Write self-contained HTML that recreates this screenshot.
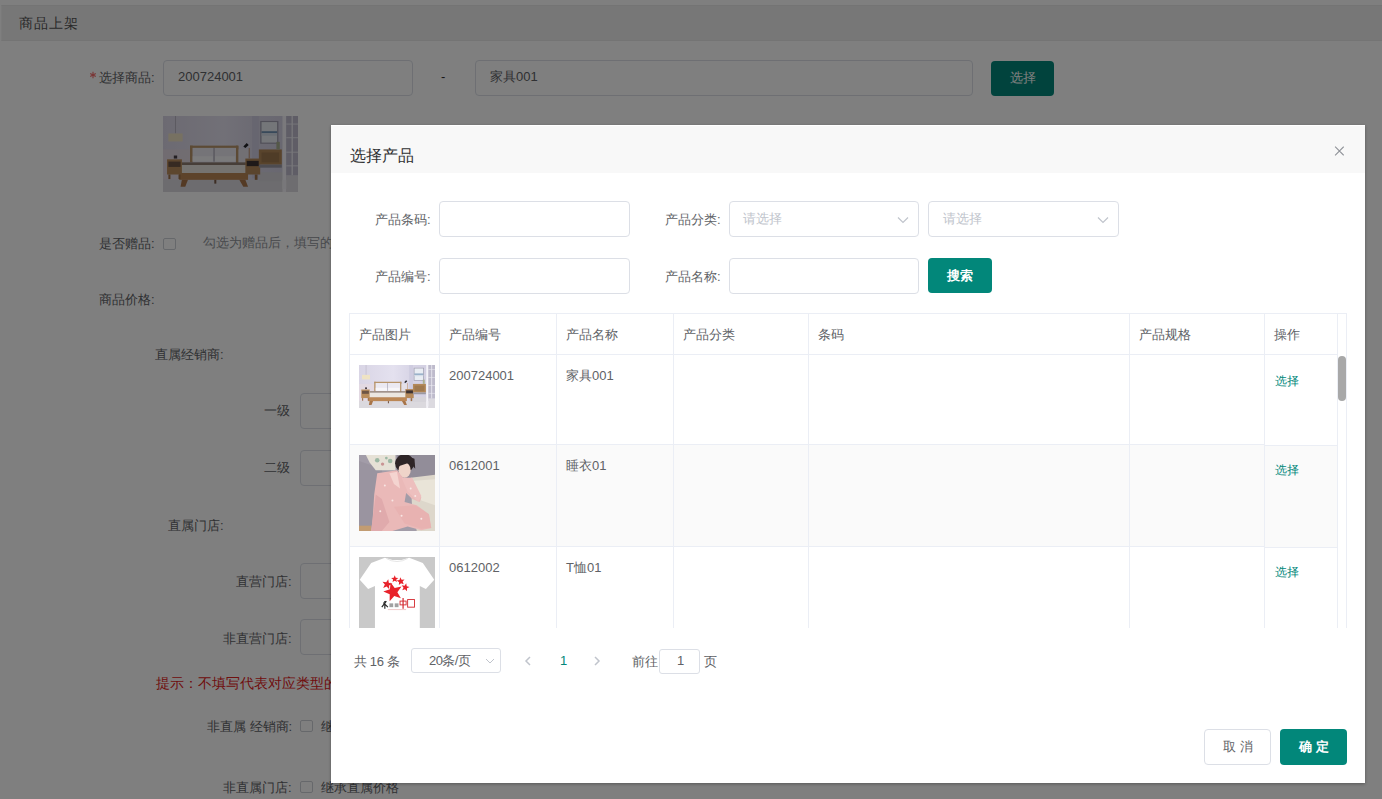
<!DOCTYPE html>
<html><head><meta charset="utf-8">
<style>
html,body{margin:0;padding:0}
body{width:1382px;height:799px;overflow:hidden;position:relative;background:#fff;font-family:"Liberation Sans",sans-serif;color:#606266;font-size:13px}
.a{position:absolute;white-space:nowrap;line-height:20px}
.box{position:absolute;box-sizing:border-box;border:1px solid #dcdfe6;border-radius:4px;background:#fff}
.cb{position:absolute;box-sizing:border-box;width:13px;height:12px;border:1px solid #cdd0d6;border-radius:2px;background:#fff}
.btn{position:absolute;box-sizing:border-box;border-radius:4px;background:#02877a}
#ov{position:absolute;left:0;top:0;width:1382px;height:799px;background:rgba(0,0,0,.5)}
#modal{position:absolute;left:331px;top:125px;width:1034px;height:658px;background:#fff;box-shadow:0 1px 3px rgba(0,0,0,.3)}
#modal .a{color:#606266}
.vl{position:absolute;width:1px;background:#ebeef5}
.hl{position:absolute;height:1px;background:#ebeef5}
.chev{position:absolute}
</style></head>
<body>
<!-- page under overlay -->
<div style="position:absolute;left:1px;top:5px;width:1381px;height:36px;box-sizing:border-box;background:#efefef;border-top:1px solid #e8e8e8;border-bottom:1px solid #e8e8e8;border-left:1px solid #f4f4f4"></div>
<div class="a" style="left:19px;top:13px;font-size:14px;letter-spacing:1px;color:#555">商品上架</div>

<svg style="position:absolute;left:89px;top:71px" width="8" height="8" viewBox="0 0 8 8"><path d="M4 0.8V7.2M1.2 2.4L6.8 5.6M6.8 2.4L1.2 5.6" stroke="#f56c6c" stroke-width="1.1"/></svg>
<div class="a" style="left:99px;top:68px">选择商品:</div>
<div class="box" style="left:163px;top:60px;width:250px;height:36px"></div>
<div class="a" style="left:178px;top:67px;font-size:13px">200724001</div>
<div class="a" style="left:441px;top:67px;font-size:13px;color:#303133">-</div>
<div class="box" style="left:475px;top:60px;width:498px;height:36px"></div>
<div class="a" style="left:490px;top:67px;font-size:13px">家具001</div>
<div class="btn" style="left:991px;top:61px;width:63px;height:35px"></div>
<div class="a" style="left:1010px;top:68px;color:#fff">选择</div>

<div id="img0" style="position:absolute;left:163px;top:116px;width:135px;height:76px"><svg viewBox="0 0 100 100" preserveAspectRatio="none" width="100%" height="100%">
<defs>
<linearGradient id="walla" x1="0" y1="0" x2="1" y2="0"><stop offset="0" stop-color="#d9d5e5"/><stop offset="0.45" stop-color="#e4e1ef"/><stop offset="0.68" stop-color="#d8d5e6"/><stop offset="1" stop-color="#d0cde0"/></linearGradient>
<filter id="bla" x="0" y="0" width="100%" height="100%"><feGaussianBlur stdDeviation="0.35"/></filter>
</defs>
<g filter="url(#bla)">
<rect width="100" height="100" fill="url(#walla)"/>
<rect x="0" y="44" width="22" height="40" fill="#e8dadf" opacity="0.6"/>
<rect x="66" y="0" width="5" height="82" fill="#cfcce0"/>
<rect x="0" y="84" width="100" height="16" fill="#dbd9de"/>

<rect x="71" y="74" width="18" height="12" fill="#d6d4da"/>
<!-- pendant lamp -->
<rect x="9" y="0" width="0.5" height="23" fill="#a8a4b2"/>
<rect x="4" y="23" width="10.5" height="10.5" fill="#efe3c4"/>
<!-- headboard -->
<rect x="20" y="39" width="35.5" height="3" fill="#b8956a"/>
<rect x="20" y="39" width="2" height="22" fill="#b8956a"/>
<rect x="54" y="39" width="2" height="24" fill="#b8956a"/>
<rect x="22" y="42" width="15.5" height="18" fill="#ebe9f1"/>
<rect x="38" y="42" width="16" height="18" fill="#ebe9f1"/>
<rect x="37.5" y="42" width="0.6" height="18" fill="#8c8898"/>
<rect x="22" y="53" width="15" height="7" fill="#f7f6f9"/>
<rect x="38.5" y="53" width="15" height="7" fill="#f7f6f9"/>
<rect x="56" y="44" width="7" height="22" fill="#e4e0e8"/>
<!-- blanket/mattress -->
<rect x="14" y="61" width="48" height="3.5" fill="#8e7d70"/>
<rect x="13" y="64.5" width="50" height="10.5" fill="#ebe6e0"/>
<!-- bed frame -->
<rect x="12" y="75" width="51" height="9" fill="#bb8755"/>
<polygon points="14,84 18.5,84 16.5,93 13,93" fill="#a8744a"/>
<polygon points="56.5,84 61,84 63,93 59.5,93" fill="#a8744a"/>
<rect x="38" y="84" width="1.5" height="5" fill="#7a5a48"/>
<!-- left nightstand -->
<rect x="3" y="57" width="11" height="20" fill="#ba8d5c"/>
<rect x="4" y="60" width="9" height="7" fill="#6e5444"/>
<rect x="4" y="77" width="1.5" height="6" fill="#9c7048"/>
<rect x="11.5" y="77" width="1.5" height="6" fill="#9c7048"/>
<rect x="8" y="52" width="2.5" height="4" fill="#4a4048"/>
<!-- right nightstand -->
<rect x="61" y="56" width="11" height="21" fill="#b5895a"/>
<rect x="62" y="59" width="9" height="7" fill="#3e3232"/>
<rect x="68" y="77" width="2" height="7" fill="#9c7048"/>
<!-- desk lamp -->
<rect x="63.5" y="42" width="0.8" height="14" fill="#c49a78"/>
<polygon points="59.5,40 62,35.5 63.5,38 61,42" fill="#202028"/>
<!-- painting -->
<rect x="72" y="6.5" width="13.5" height="30" fill="#a09eb0"/>
<rect x="73" y="8" width="11.5" height="27" fill="#e9edf3"/>
<rect x="73" y="20" width="11.5" height="2.6" fill="#7193b4"/>
<rect x="73" y="23" width="11.5" height="3" fill="#d4dde8"/>
<!-- sideboard -->
<rect x="71" y="44" width="17" height="20" fill="#b38858"/>
<rect x="73" y="48" width="13" height="13" fill="#8c6a48" opacity="0.5"/>
<rect x="71" y="64" width="17" height="4" fill="#9a98a2"/>
<rect x="84" y="34" width="2.5" height="10" fill="#a9b090"/>
<!-- door frame and window -->
<rect x="88.5" y="0" width="2.8" height="100" fill="#f4f3f8"/>
<rect x="91.3" y="0" width="8.7" height="78" fill="#bebbcc"/>
<rect x="95.2" y="0" width="1" height="78" fill="#eeedf4"/>
<rect x="91.3" y="10" width="8.7" height="1.2" fill="#eeedf4"/>
<rect x="91.3" y="28" width="8.7" height="1.2" fill="#eeedf4"/>
<rect x="91.3" y="47" width="8.7" height="1.2" fill="#eeedf4"/>
<rect x="91.3" y="65" width="8.7" height="1.2" fill="#eeedf4"/>
<rect x="91.3" y="78" width="8.7" height="22" fill="#dcdae0"/>
<rect x="88.5" y="84" width="2.8" height="12" fill="#f0eff4"/>
</g>
</svg></div>

<div class="a" style="left:99px;top:234px">是否赠品:</div>
<div class="cb" style="left:163px;top:238px"></div>
<div class="a" style="left:203px;top:233px;color:#909399">勾选为赠品后，填写的价格无效</div>
<div class="a" style="left:99px;top:290px">商品价格:</div>
<div class="a" style="left:155px;top:345px">直属经销商:</div>
<div class="a" style="left:264px;top:401px">一级</div>
<div class="box" style="left:300px;top:393px;width:200px;height:36px"></div>
<div class="a" style="left:264px;top:458px">二级</div>
<div class="box" style="left:300px;top:450px;width:200px;height:36px"></div>
<div class="a" style="left:168px;top:516px">直属门店:</div>
<div class="a" style="left:236px;top:572px">直营门店:</div>
<div class="box" style="left:300px;top:563px;width:200px;height:36px"></div>
<div class="a" style="left:223px;top:629px">非直营门店:</div>
<div class="box" style="left:300px;top:619px;width:200px;height:36px"></div>
<div class="a" style="left:156px;top:673px;font-size:14px;color:#e02020">提示：不填写代表对应类型的价格</div>
<div class="a" style="left:207px;top:717px">非直属 经销商:</div>
<div class="cb" style="left:300px;top:720px"></div>
<div class="a" style="left:321px;top:717px">继承直属价格</div>
<div class="a" style="left:223px;top:778px">非直属门店:</div>
<div class="cb" style="left:300px;top:781px"></div>
<div class="a" style="left:321px;top:778px">继承直属价格</div>

<div id="ov"></div>

<div id="modal"></div>
<div style="position:absolute;left:331px;top:126px;width:1034px;height:47px;background:#f8f8f8"></div>
<div class="a" style="left:350px;top:146px;font-size:16px;color:#303133">选择产品</div>
<svg style="position:absolute;left:1334px;top:146px" width="10" height="10" viewBox="0 0 10 10"><path d="M1.1 0.7L9.7 9.3M9.7 0.7L1.1 9.3" stroke="#909399" stroke-width="1.1"/></svg>

<!-- form -->
<div class="a" style="left:375px;top:210px">产品条码:</div>
<div class="box" style="left:439px;top:201px;width:191px;height:36px"></div>
<div class="a" style="left:665px;top:210px">产品分类:</div>
<div class="box" style="left:729px;top:201px;width:190px;height:36px"></div>
<div class="a" style="left:743px;top:209px;color:#c0c4cc">请选择</div>
<svg class="chev" style="left:897px;top:216px" width="12" height="8" viewBox="0 0 12 8"><path d="M1 1.5L6 6.5L11 1.5" fill="none" stroke="#c0c4cc" stroke-width="1.2"/></svg>
<div class="box" style="left:928px;top:201px;width:191px;height:36px"></div>
<div class="a" style="left:943px;top:209px;color:#c0c4cc">请选择</div>
<svg class="chev" style="left:1097px;top:216px" width="12" height="8" viewBox="0 0 12 8"><path d="M1 1.5L6 6.5L11 1.5" fill="none" stroke="#c0c4cc" stroke-width="1.2"/></svg>

<div class="a" style="left:375px;top:267px">产品编号:</div>
<div class="box" style="left:439px;top:258px;width:191px;height:36px"></div>
<div class="a" style="left:665px;top:267px">产品名称:</div>
<div class="box" style="left:729px;top:258px;width:190px;height:36px"></div>
<div class="btn" style="left:928px;top:258px;width:64px;height:35px"></div>
<div class="a" style="left:947px;top:266px;color:#fff;font-weight:bold">搜索</div>

<!-- table -->
<div style="position:absolute;left:349px;top:313px;width:998px;height:315px;overflow:hidden">
  <div style="position:absolute;left:0;top:131px;width:988px;height:102px;background:#fafafa"></div>
</div>
<div class="hl" style="left:349px;top:313px;width:998px"></div>
<div class="hl" style="left:349px;top:354px;width:989px"></div>
<div class="hl" style="left:349px;top:444px;width:915px"></div>
<div class="hl" style="left:349px;top:546px;width:915px"></div>
<div style="position:absolute;left:1265px;top:444px;width:72px;height:103px;background:#fff"></div>
<div style="position:absolute;left:1265px;top:446px;width:72px;height:101px;background:#fafafa"></div>
<div class="hl" style="left:1264px;top:445px;width:74px"></div>
<div class="hl" style="left:1264px;top:547px;width:74px"></div>
<div class="vl" style="left:349px;top:313px;height:315px"></div>
<div class="vl" style="left:439px;top:313px;height:315px"></div>
<div class="vl" style="left:556px;top:313px;height:315px"></div>
<div class="vl" style="left:673px;top:313px;height:315px"></div>
<div class="vl" style="left:808px;top:313px;height:315px"></div>
<div class="vl" style="left:1129px;top:313px;height:315px"></div>
<div class="vl" style="left:1264px;top:313px;height:315px"></div>
<div class="vl" style="left:1337px;top:313px;height:315px"></div>
<div class="vl" style="left:1346px;top:313px;height:315px"></div>
<div style="position:absolute;left:1338px;top:356px;width:8px;height:45px;border-radius:4px;background:#a8a8a8"></div>

<div class="a" style="left:359px;top:325px">产品图片</div>
<div class="a" style="left:449px;top:325px">产品编号</div>
<div class="a" style="left:566px;top:325px">产品名称</div>
<div class="a" style="left:683px;top:325px">产品分类</div>
<div class="a" style="left:818px;top:325px">条码</div>
<div class="a" style="left:1139px;top:325px">产品规格</div>
<div class="a" style="left:1274px;top:325px">操作</div>

<div id="img1" style="position:absolute;left:359px;top:365px;width:76px;height:43px"><svg viewBox="0 0 100 100" preserveAspectRatio="none" width="100%" height="100%">
<defs>
<linearGradient id="wallb" x1="0" y1="0" x2="1" y2="0"><stop offset="0" stop-color="#d9d5e5"/><stop offset="0.45" stop-color="#e4e1ef"/><stop offset="0.68" stop-color="#d8d5e6"/><stop offset="1" stop-color="#d0cde0"/></linearGradient>
<filter id="blb" x="0" y="0" width="100%" height="100%"><feGaussianBlur stdDeviation="0.35"/></filter>
</defs>
<g filter="url(#blb)">
<rect width="100" height="100" fill="url(#wallb)"/>
<rect x="0" y="44" width="22" height="40" fill="#e8dadf" opacity="0.6"/>
<rect x="66" y="0" width="5" height="82" fill="#cfcce0"/>
<rect x="0" y="84" width="100" height="16" fill="#dbd9de"/>

<rect x="71" y="74" width="18" height="12" fill="#d6d4da"/>
<!-- pendant lamp -->
<rect x="9" y="0" width="0.5" height="23" fill="#a8a4b2"/>
<rect x="4" y="23" width="10.5" height="10.5" fill="#efe3c4"/>
<!-- headboard -->
<rect x="20" y="39" width="35.5" height="3" fill="#b8956a"/>
<rect x="20" y="39" width="2" height="22" fill="#b8956a"/>
<rect x="54" y="39" width="2" height="24" fill="#b8956a"/>
<rect x="22" y="42" width="15.5" height="18" fill="#ebe9f1"/>
<rect x="38" y="42" width="16" height="18" fill="#ebe9f1"/>
<rect x="37.5" y="42" width="0.6" height="18" fill="#8c8898"/>
<rect x="22" y="53" width="15" height="7" fill="#f7f6f9"/>
<rect x="38.5" y="53" width="15" height="7" fill="#f7f6f9"/>
<rect x="56" y="44" width="7" height="22" fill="#e4e0e8"/>
<!-- blanket/mattress -->
<rect x="14" y="61" width="48" height="3.5" fill="#8e7d70"/>
<rect x="13" y="64.5" width="50" height="10.5" fill="#ebe6e0"/>
<!-- bed frame -->
<rect x="12" y="75" width="51" height="9" fill="#bb8755"/>
<polygon points="14,84 18.5,84 16.5,93 13,93" fill="#a8744a"/>
<polygon points="56.5,84 61,84 63,93 59.5,93" fill="#a8744a"/>
<rect x="38" y="84" width="1.5" height="5" fill="#7a5a48"/>
<!-- left nightstand -->
<rect x="3" y="57" width="11" height="20" fill="#ba8d5c"/>
<rect x="4" y="60" width="9" height="7" fill="#6e5444"/>
<rect x="4" y="77" width="1.5" height="6" fill="#9c7048"/>
<rect x="11.5" y="77" width="1.5" height="6" fill="#9c7048"/>
<rect x="8" y="52" width="2.5" height="4" fill="#4a4048"/>
<!-- right nightstand -->
<rect x="61" y="56" width="11" height="21" fill="#b5895a"/>
<rect x="62" y="59" width="9" height="7" fill="#3e3232"/>
<rect x="68" y="77" width="2" height="7" fill="#9c7048"/>
<!-- desk lamp -->
<rect x="63.5" y="42" width="0.8" height="14" fill="#c49a78"/>
<polygon points="59.5,40 62,35.5 63.5,38 61,42" fill="#202028"/>
<!-- painting -->
<rect x="72" y="6.5" width="13.5" height="30" fill="#a09eb0"/>
<rect x="73" y="8" width="11.5" height="27" fill="#e9edf3"/>
<rect x="73" y="20" width="11.5" height="2.6" fill="#7193b4"/>
<rect x="73" y="23" width="11.5" height="3" fill="#d4dde8"/>
<!-- sideboard -->
<rect x="71" y="44" width="17" height="20" fill="#b38858"/>
<rect x="73" y="48" width="13" height="13" fill="#8c6a48" opacity="0.5"/>
<rect x="71" y="64" width="17" height="4" fill="#9a98a2"/>
<rect x="84" y="34" width="2.5" height="10" fill="#a9b090"/>
<!-- door frame and window -->
<rect x="88.5" y="0" width="2.8" height="100" fill="#f4f3f8"/>
<rect x="91.3" y="0" width="8.7" height="78" fill="#bebbcc"/>
<rect x="95.2" y="0" width="1" height="78" fill="#eeedf4"/>
<rect x="91.3" y="10" width="8.7" height="1.2" fill="#eeedf4"/>
<rect x="91.3" y="28" width="8.7" height="1.2" fill="#eeedf4"/>
<rect x="91.3" y="47" width="8.7" height="1.2" fill="#eeedf4"/>
<rect x="91.3" y="65" width="8.7" height="1.2" fill="#eeedf4"/>
<rect x="91.3" y="78" width="8.7" height="22" fill="#dcdae0"/>
<rect x="88.5" y="84" width="2.8" height="12" fill="#f0eff4"/>
</g>
</svg></div>
<div class="a" style="left:449px;top:366px">200724001</div>
<div class="a" style="left:566px;top:366px">家具001</div>
<div class="a" style="left:1275px;top:371px;font-size:12px;color:#02877a">选择</div>

<div id="img2" style="position:absolute;left:359px;top:455px;width:76px;height:76px"><svg viewBox="0 0 100 100" preserveAspectRatio="none" width="100%" height="100%">
<rect width="100" height="100" fill="#a29ca8"/>
<polygon points="0,8 30,18 34,60 20,96 0,100" fill="#9a94a0"/>
<rect x="50" y="0" width="50" height="30" fill="#928d99"/>
<polygon points="9,0 48,0 48,20 22,20 14,10" fill="#e6e1d6"/>
<circle cx="24" cy="7" r="3" fill="#9cb8a4"/><circle cx="31" cy="12" r="2.2" fill="#c99494"/><circle cx="41" cy="8" r="3" fill="#9cb8a4"/><circle cx="36" cy="4" r="1.8" fill="#9cb8a4"/>
<polygon points="68,30 100,26 100,100 76,100 70,72" fill="#ddd7cb"/>
<polygon points="72,34 100,32 100,66 82,60" fill="#e9e4d8"/>
<rect x="0" y="93" width="16" height="7" fill="#c29c72"/>
<ellipse cx="60" cy="11" rx="12.5" ry="12" fill="#2e2527"/>
<ellipse cx="60" cy="20" rx="8" ry="10" fill="#efd4c9"/>
<polygon points="48,9 60,0 73,5 74,18 67,10 51,15" fill="#2e2527"/>
<polygon points="24,24 50,20 58,30 70,32 82,56 80,62 70,58 62,50 60,62 76,66 92,78 95,96 82,99 64,94 44,100 16,100 18,84 20,52" fill="#eab9b8"/>
<polygon points="56,30 70,30 82,54 78,62 64,48" fill="#edbfbe"/>
<polygon points="40,24 50,22 54,44 46,38" fill="#f4d4d0"/>
<polygon points="16,100 18,84 22,52 30,58 40,88 30,100" fill="#e0aaac"/>
<polygon points="46,68 74,66 92,78 95,96 82,97 60,90" fill="#e8b2b1"/>
<g fill="#f8e6e4"><circle cx="34" cy="40" r="1.3"/><circle cx="44" cy="60" r="1.3"/><circle cx="68" cy="44" r="1.3"/><circle cx="56" cy="80" r="1.3"/><circle cx="82" cy="84" r="1.3"/><circle cx="28" cy="74" r="1.3"/><circle cx="74" cy="54" r="1.3"/></g>
</svg></div>
<div class="a" style="left:449px;top:456px">0612001</div>
<div class="a" style="left:566px;top:456px">睡衣01</div>
<div class="a" style="left:1275px;top:460px;font-size:12px;color:#02877a">选择</div>

<div style="position:absolute;left:359px;top:557px;width:76px;height:71px;overflow:hidden"><div id="img3" style="width:76px;height:76px"><svg viewBox="0 0 100 100" preserveAspectRatio="none" width="100%" height="100%">
<rect width="100" height="100" fill="#c9c9c9"/>
<polygon points="34,1 44,4 56,4 66,1 84,8 99,30 88,42 80,38 80,100 21,100 21,38 12,42 1,30 16,8" fill="#ffffff"/>
<path d="M36 2 Q50 10 64 2" fill="none" stroke="#e4e4e4" stroke-width="1.2"/>
<polygon points="41.6,33.4 47.0,40.9 55.9,38.9 50.5,46.3 55.1,54.2 46.4,51.3 40.3,58.1 40.4,49.0 32.0,45.3 40.7,42.5" fill="#e8222a"/>
<polygon points="38.5,29.2 39.2,34.0 44.0,35.3 39.6,37.5 39.8,42.4 36.4,38.9 31.8,40.7 34.0,36.3 30.9,32.5 35.8,33.3" fill="#e8222a"/>
<polygon points="47.0,24.0 48.3,27.2 51.8,27.5 49.1,29.7 49.9,33.0 47.0,31.2 44.1,33.0 44.9,29.7 42.2,27.5 45.7,27.2" fill="#e8222a"/>
<polygon points="54.2,26.6 56.1,29.9 59.9,29.6 57.4,32.4 58.8,36.0 55.3,34.4 52.4,36.9 52.8,33.1 49.6,31.0 53.3,30.3" fill="#e8222a"/>
<polygon points="62.1,34.6 62.8,38.4 66.5,39.4 63.1,41.2 63.2,45.0 60.5,42.3 56.9,43.7 58.6,40.3 56.2,37.2 60.0,37.8" fill="#e8222a"/>
<path d="M30 66 L36 58 M32 60 L38 66 M34 58 L34 68" stroke="#2a2a2a" stroke-width="1.6"/>
<rect x="40" y="61" width="5" height="5" fill="#8a8a8a" opacity="0.8"/>
<rect x="47" y="61" width="5" height="5" fill="#8a8a8a" opacity="0.8"/>
<path d="M58 54 L58 68" stroke="#d42a30" stroke-width="1.6"/>
<rect x="54" y="58" width="8" height="5" fill="none" stroke="#d42a30" stroke-width="1.2"/>
<rect x="64" y="56" width="9" height="10" fill="none" stroke="#d42a30" stroke-width="1.2"/>
<rect x="38" y="69" width="24" height="0.8" fill="#e8a8a8"/>
</svg></div></div>
<div class="a" style="left:449px;top:558px">0612002</div>
<div class="a" style="left:566px;top:558px">T恤01</div>
<div class="a" style="left:1275px;top:562px;font-size:12px;color:#02877a">选择</div>

<!-- pagination -->
<div class="a" style="left:354px;top:652px;letter-spacing:-0.4px">共 16 条</div>
<div class="box" style="left:411px;top:648px;width:90px;height:25px;border-radius:3px"></div>
<div class="a" style="left:429px;top:651px;letter-spacing:-0.6px">20条/页</div>
<svg class="chev" style="left:485px;top:658px" width="10" height="6" viewBox="0 0 10 6"><path d="M1 1L5 5L9 1" fill="none" stroke="#c0c4cc" stroke-width="1"/></svg>
<svg style="position:absolute;left:524px;top:656px" width="8" height="10" viewBox="0 0 8 10"><path d="M6 1L2 5L6 9" fill="none" stroke="#c0c4cc" stroke-width="1.5"/></svg>
<div class="a" style="left:560px;top:651px;color:#02877a">1</div>
<svg style="position:absolute;left:593px;top:656px" width="8" height="10" viewBox="0 0 8 10"><path d="M2 1L6 5L2 9" fill="none" stroke="#c0c4cc" stroke-width="1.5"/></svg>
<div class="a" style="left:632px;top:652px">前往</div>
<div class="box" style="left:659px;top:649px;width:41px;height:25px;border-radius:3px"></div>
<div class="a" style="left:677px;top:651px">1</div>
<div class="a" style="left:704px;top:652px">页</div>

<!-- footer -->
<div class="box" style="left:1204px;top:729px;width:67px;height:36px"></div>
<div class="a" style="left:1223px;top:737px">取 消</div>
<div class="btn" style="left:1280px;top:729px;width:67px;height:36px"></div>
<div class="a" style="left:1299px;top:737px;color:#fff;font-weight:bold">确 定</div>
</body></html>
